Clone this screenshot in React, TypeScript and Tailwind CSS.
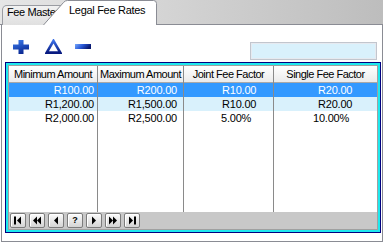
import React from "react";

const NavGlyph = ({ kind }: { kind: string }) => {
  const c = "#000";
  let shapes: React.ReactNode = null;
  if (kind === "first")
    shapes = (
      <>
        <rect x="3" y="2.5" width="2" height="8" fill={c} />
        <polygon points="10,2.5 10,10.5 6,6.5" fill={c} />
      </>
    );
  if (kind === "prevpage")
    shapes = (
      <>
        <polygon points="7,2.5 7,10.5 3,6.5" fill={c} />
        <polygon points="11,2.5 11,10.5 7,6.5" fill={c} />
      </>
    );
  if (kind === "prev") shapes = <polygon points="9,2.5 9,10.5 5,6.5" fill={c} />;
  if (kind === "next") shapes = <polygon points="5,2.5 5,10.5 9,6.5" fill={c} />;
  if (kind === "nextpage")
    shapes = (
      <>
        <polygon points="3,2.5 3,10.5 7,6.5" fill={c} />
        <polygon points="7,2.5 7,10.5 11,6.5" fill={c} />
      </>
    );
  if (kind === "last")
    shapes = (
      <>
        <polygon points="4,2.5 4,10.5 8,6.5" fill={c} />
        <rect x="9" y="2.5" width="2" height="8" fill={c} />
      </>
    );
  return (
    <svg width="14" height="13" viewBox="0 0 14 13">
      {shapes}
    </svg>
  );
};

const NavButton = ({ kind }: { kind: string }) => (
  <div className="flex h-[15px] w-[16px] items-center justify-center rounded-[2px] border border-[#7c7c7c] bg-gradient-to-b from-[#fbfbfb] to-[#d4d4d4] shadow-[inset_1px_1px_0_#ffffff]">
    {kind === "help" ? (
      <span className="text-[9px] font-bold leading-[9px] text-black">?</span>
    ) : (
      <NavGlyph kind={kind} />
    )}
  </div>
);

const rowBg = ["bg-[#3399ff] text-white", "bg-[#d9f1fc] text-black", "bg-white text-black"];

const Column = ({
  title,
  width,
  align,
  cells,
  last,
}: {
  title: string;
  width: string;
  align: "right" | "left";
  cells: { text: string; cls: string }[];
  last?: boolean;
}) => (
  <div className={`flex flex-col ${width} ${last ? "" : "border-r border-[#8a8a8a]"}`}>
    <div className="h-[17px] whitespace-nowrap border-b border-[#a8a8a8] bg-gradient-to-b from-[#ffffff] to-[#ebebeb] text-center leading-[16px] tracking-[-0.5px] text-black">
      {title}
    </div>
    {cells.map((c, i) => (
      <div
        key={i}
        className={`h-[14px] leading-[14px] whitespace-nowrap ${rowBg[i]} ${align === "right" ? "text-right" : "text-left"} ${c.cls}`}
      >
        {c.text}
      </div>
    ))}
    <div className="flex-1 bg-white" />
  </div>
);

export default function App() {
  return (
    <div className="h-[244px] w-[383px] bg-white font-['Liberation_Sans',Arial,sans-serif] text-[11px] tracking-[-0.2px] text-black">
      {/* Tab strip */}
      <div className="flex h-[25px] items-end bg-gradient-to-r from-[#e6e6e6] to-[#bdbdbd] shadow-[inset_0_-1px_0_#8a8c94]">
        <div className="ml-[2px] h-[20px] w-[64px] overflow-hidden whitespace-nowrap rounded-t-[5px] border border-b-0 border-[#9a9ca2] bg-gradient-to-b from-[#f2f2f2] to-[#e0e0e0] pl-[4px] leading-[13px] tracking-[-0.4px]">
          Fee Master
        </div>
        <div className="relative z-10 -ml-[23px] h-[25px] w-[114px]">
          <svg className="absolute inset-0" width="114" height="25" viewBox="0 0 114 25">
            <path
              d="M0.5 25 L20.5 2.5 Q22 0.5 24.5 0.5 L110.5 0.5 Q113.5 0.5 113.5 3.5 L113.5 25"
              fill="#ffffff"
              stroke="#8a8c94"
              strokeWidth="1"
            />
          </svg>
          <div className="relative pl-[26px] pt-[4px] leading-[13px] whitespace-nowrap tracking-[-0.3px]">Legal Fee Rates</div>
        </div>
      </div>

      {/* Panel */}
      <div className="ml-[1px] flex h-[217px] w-[382px] flex-col border-x border-b border-[#8a8c94] bg-white">
        {/* Toolbar */}
        <div className="flex h-[37px] items-start">
          <svg className="ml-[11px] mt-[15px]" width="16" height="14" viewBox="0 0 16 14">
            <defs>
              <linearGradient id="plusg" x1="0" y1="0" x2="0.4" y2="1">
                <stop offset="0" stopColor="#3f80f2" />
                <stop offset="1" stopColor="#0b2a94" />
              </linearGradient>
            </defs>
            <path d="M5.5 0h5v4.5h5.5v5h-5.5v4.5h-5v-4.5h-5.5v-5h5.5z" fill="url(#plusg)" />
          </svg>
          <svg className="ml-[16px] mt-[14px]" width="17" height="15" viewBox="0 0 17 15">
            <defs>
              <linearGradient id="trig" x1="0" y1="0" x2="0" y2="1">
                <stop offset="0" stopColor="#3a6ee6" />
                <stop offset="1" stopColor="#081a80" />
              </linearGradient>
            </defs>
            <path d="M8.5 1.8 L15.3 13.6 H1.7 Z" fill="none" stroke="url(#trig)" strokeWidth="2.6" strokeLinejoin="miter" />
          </svg>
          <svg className="ml-[13px] mt-[19px]" width="16" height="5" viewBox="0 0 16 5">
            <defs>
              <linearGradient id="ming" x1="0" y1="0" x2="1" y2="0.3">
                <stop offset="0" stopColor="#78a8fa" />
                <stop offset="0.5" stopColor="#2a5ad8" />
                <stop offset="1" stopColor="#081870" />
              </linearGradient>
            </defs>
            <rect x="0" y="0" width="16" height="5" fill="url(#ming)" />
          </svg>
          <div className="ml-auto mr-[5px] mt-[17px] h-[18px] w-[127px] border border-[#c2c6ce] bg-[#d9f1fc] shadow-[inset_0_0_0_1px_#e6eaf0]" />
        </div>

        {/* Grid */}
        <div className="ml-[3px] flex h-[171px] w-[376px] flex-col border border-[#000080]">
          <div className="flex flex-1 flex-col border-2 border-[#1ee8ee]">
            <div className="flex flex-1 flex-col border border-[#a0a0a0] bg-white">
              <div className="flex flex-1">
                <Column
                  title="Minimum Amount"
                  width="w-[89px]"
                  align="right"
                  cells={[
                    { text: "R100.00", cls: "pr-[3px]" },
                    { text: "R1,200.00", cls: "pr-[3px]" },
                    { text: "R2,000.00", cls: "pr-[3px]" },
                  ]}
                />
                <Column
                  title="Maximum Amount"
                  width="w-[86px]"
                  align="right"
                  cells={[
                    { text: "R200.00", cls: "pr-[6px]" },
                    { text: "R1,500.00", cls: "pr-[6px]" },
                    { text: "R2,500.00", cls: "pr-[6px]" },
                  ]}
                />
                <Column
                  title="Joint Fee Factor"
                  width="w-[90px]"
                  align="left"
                  cells={[
                    { text: "R10.00", cls: "pl-[38px]" },
                    { text: "R10.00", cls: "pl-[38px]" },
                    { text: "5.00%", cls: "pl-[37px]" },
                  ]}
                />
                <Column
                  title="Single Fee Factor"
                  width="w-[103px]"
                  align="left"
                  last
                  cells={[
                    { text: "R20.00", cls: "pl-[44px]" },
                    { text: "R20.00", cls: "pl-[44px]" },
                    { text: "10.00%", cls: "pl-[39px]" },
                  ]}
                />
              </div>
              {/* Navigator */}
              <div className="flex h-[17px] gap-[3px] bg-[#c8c8c8] pl-[1px] pt-[1px]">
                {["first", "prevpage", "prev", "help", "next", "nextpage", "last"].map((k) => (
                  <NavButton key={k} kind={k} />
                ))}
              </div>
            </div>
          </div>
        </div>
      </div>
    </div>
  );
}
